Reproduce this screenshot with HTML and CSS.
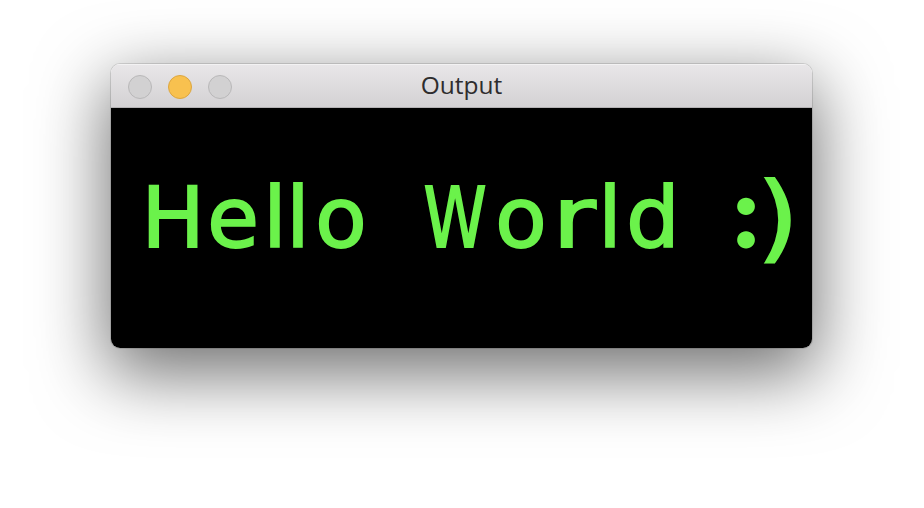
FILE: index.html
```html
<!DOCTYPE html>
<html>
<head>
<meta charset="utf-8">
<link rel="stylesheet" href="styles.css">
</head>
<body>
<div class="window">
  <div class="titlebar">
    <div class="lights">
      <span class="light light-close"></span>
      <span class="light light-min"></span>
      <span class="light light-max"></span>
    </div>
    <div class="title">Output</div>
  </div>
  <div class="content">
    <div class="hello" aria-label="Hello World :)">
      <span class="g g1">H</span><span class="g g2">e</span><span class="g g3">l</span><span class="g g4">l</span><span class="g g5">o</span><span class="g g6">W</span><span class="g g7">o</span><span class="g g8">r</span><span class="g g9">l</span><span class="g g10">d</span><span class="g g11">:</span><span class="g g12">)</span>
    </div>
  </div>
</div>
</body>
</html>
```
FILE: styles.css
```css
html, body {
  margin: 0;
  padding: 0;
  background: #ffffff;
}
body {
  width: 924px;
  height: 508px;
  padding: 64px 0 0 111px;
  box-sizing: border-box;
  overflow: hidden;
}
.window {
  width: 701px;
  height: 284px;
  border-radius: 9px;
  overflow: hidden;
  display: flex;
  flex-direction: column;
  box-shadow: 0 22px 70px 4px rgba(0,0,0,0.56), 0 0 0 1px rgba(0,0,0,0.12);
}
.titlebar {
  height: 43px;
  flex: 0 0 43px;
  background: linear-gradient(#e9e7e9, #d3d1d3);
  border-bottom: 1px solid #b4b2b4;
  box-shadow: inset 0 1px 0 #f3f2f3;
  position: relative;
  display: flex;
  align-items: center;
  justify-content: center;
}
.lights {
  position: absolute;
  left: 17px;
  top: 11px;
  display: flex;
  gap: 16px;
}
.light {
  width: 22px;
  height: 22px;
  border-radius: 50%;
  border: 1px solid #b9b8b9;
  background: #d2d1d2;
}
.light-min {
  background: #f8c14f;
  border-color: #dca640;
}
.title {
  font-family: "Open Sans", "DejaVu Sans", sans-serif;
  font-size: 24.5px;
  color: #2e2d2e;
  line-height: 1;
}
.content {
  flex: 1;
  background: #000000;
  padding: 54px 0 0 0;
}
.hello {
  display: flex;
  align-items: baseline;
  font-family: "DejaVu Sans", sans-serif;
  font-size: 84px;
  line-height: 1;
  color: #6bf24b;
  -webkit-text-stroke: 2px #6bf24b;
  white-space: nowrap;
}
.g {
  display: flex;
  justify-content: center;
  width: 0;
  min-width: 0;
  flex: 0 0 0;
}
.g1 { margin-left: 62px; }
.g2 { margin-left: 60px; }
.g3 { margin-left: 42px; }
.g4 { margin-left: 23px; }
.g5 { margin-left: 43px; }
.g6 { margin-left: 114px; transform: scaleX(0.76); }
.g7 { margin-left: 66px; }
.g8 { margin-left: 53px; transform: scaleX(1.25); }
.g9 { margin-left: 36px; }
.g10 { margin-left: 43px; }
.g11 { margin-left: 93px; font-family: "Lato", "DejaVu Sans", sans-serif; font-weight: 900; font-size: 96px; }
.g12 { margin-left: 32px; transform: scale(1.25, 1.12); }
```
